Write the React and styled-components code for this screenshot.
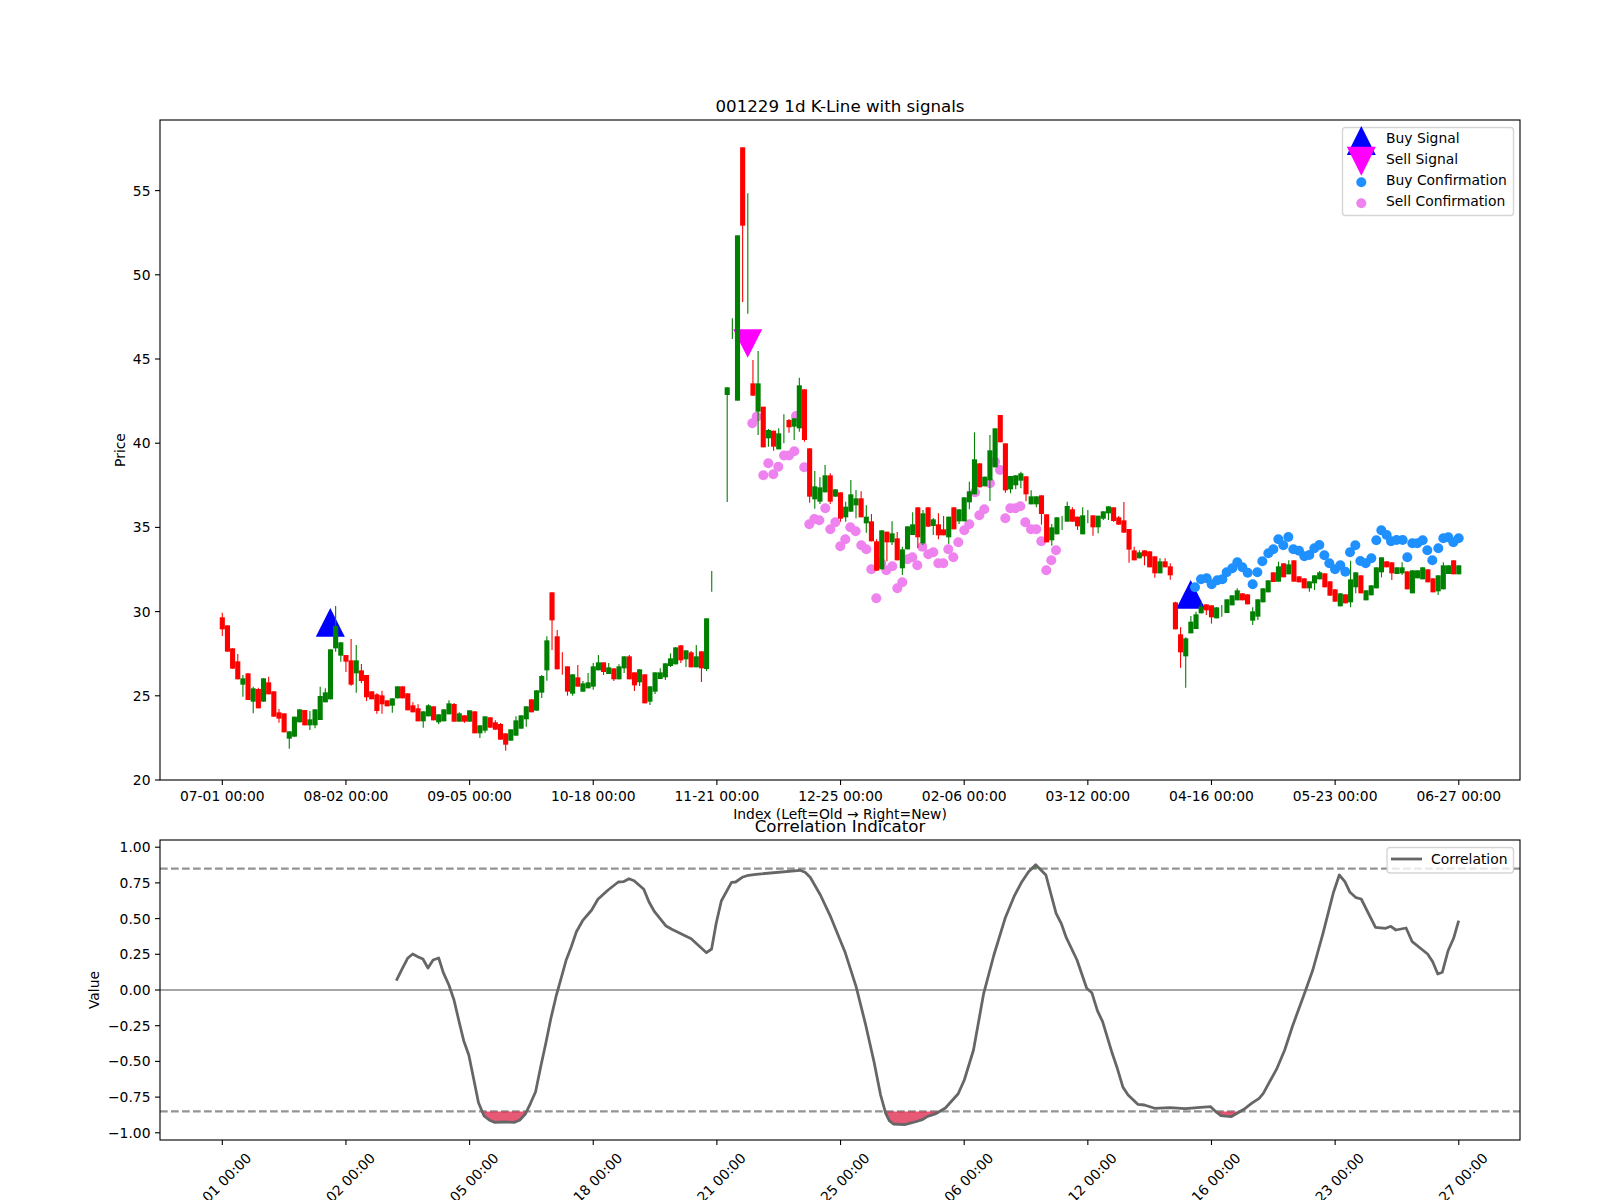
import styled, { createGlobalStyle } from 'styled-components';

const GlobalStyle = createGlobalStyle`
  html, body { margin: 0; padding: 0; background: #fff; }
`;

const Figure = styled.svg`
  display: block;
  width: 1600px;
  height: 1200px;
  font-family: 'DejaVu Sans', sans-serif;
`;
const Label = styled.text`
  font-size: 13.89px;
  fill: #000;
  text-anchor: ${p => p.$anchor || 'middle'};
`;
const Title = styled.text`
  font-size: 16.67px;
  fill: #000;
  text-anchor: middle;
`;
const Spine = styled.rect`
  fill: none;
  stroke: #000;
  stroke-width: 1.11;
`;
const Tick = styled.line`
  stroke: #000;
  stroke-width: 1.11;
`;
const LegendBox = styled.rect`
  fill: #fff;
  fill-opacity: 0.8;
  stroke: #ccc;
  stroke-opacity: 0.8;
  stroke-width: 1.39;
`;
const Level = styled.line`
  stroke: #808080;
  stroke-opacity: ${p => (p.$solid ? 0.7 : 0.85)};
  stroke-width: 2.08;
  stroke-dasharray: ${p => (p.$solid ? 'none' : '7.7 3.3')};
`;
const CorrLine = styled.polyline`
  fill: none;
  stroke: #666;
  stroke-width: 2.78;
  stroke-linejoin: round;
`;

// candles traced off the chart: [colour, body top, body bottom, high, low]
// y values are 3x zoomed, measured from the base of each block. 0 = same as body, no body = doji
const block1 = [
  ['r',232,268,218,288],['r',256,335],['r',325,386],['r',364,418,342],['g',415,434,405,470],['r',400,480],['g',445,485,440,520],['r',447,505,443],
  ['g',415,485],['r',427,463,410],['r',454,530],['r',517,536,507,548],['r',520,577],['g',574,596,0,626],['g',530,590],['g',508,547],
  ['r',510,556],['g',538,556,513,570],['g',508,556,0,565],['g',468,540,440],['g',457,487,445],['g',328,478],['g',258,325,198,335],['g',307,347,0,365],
  ['r',345,365,0,396],['r',361,434,297,437],['g',361,400,315,458],['r',391,423,372,430],['r',405,472,0,483],['r',454,478],['r',463,513,460,521],['r',466,493,452,521],
  ['r',481,499],['g',475,497,0,518],['g',439,475],['r',439,475],['r',460,511],['r',496,517,487],['r',505,544,493],['g',514,544,0,563],
  ['g',496,529,493],['r',499,541],['g',523,547,0,553],['g',508,544],['g',490,523,481],
  ['r',492,545,489],['g',520,545,517],['r',526,545,0,548],['g',511,545],['r',514,580],['g',556,580,0,594],['g',529,572,0,578],['r',532,563],
  ['r',547,569,541],['r',552,599,549],['r',580,614,0,632],['g',568,602],['g',541,587,529],['g',526,566],['g',499,538,0,560],['r',478,517],['g',451,512],
  ['g',408,458,405,474],['g',301,391,289,422],['r',157,241,0,330],['r',289,388,270],['r',0,0,337,404],['r',379,455,0,467],['g',403,461,0,467],['r',412,440,375],
  ['g',430,455,423],['g',427,445,399],['g',379,440,369,449],['g',367,391,345],['r',367,396,0,405],['g',382,402,369],['r',385,418,0,423],['g',379,418,373],
  ['g',349,385,0,399],['r',349,418,345],['r',397,436,0,453],['g',388,427,0,438],['r',403,490],['g',439,485,0,495],['g',397,455,0,462],['g',397,417,385],
  ['g',370,412,0,420],['g',355,378,340,381],['g',322,373],['r',316,361,0,369],['g',331,358,0,381],['r',337,382,333],['g',349,382,315],['r',334,385,0,426],
  ['g',235,387,0,393],['g',0,0,93,155],
];
const block2 = [
  null,null,['g',772,795,0,1116],['g',0,0,565,627],['g',316,812],['r',52,287,0,516],['g',0,0,190,551],['r',760,797,690],['g',760,845,663,915],['r',830,952],
  ['g',900,925,897,950],['r',902,950,0,962],['g',910,958,895],['g',0,0,853,940],['r',870,892,867,908],['g',865,890,0,930],['g',766,895,743,905],['r',778,930,0,935],
];
const block3 = [
  ['r',85,230,0,248],['g',199,238,153,266],['g',202,245,172,252],['g',166,217,135],['r',166,245,160,252],['g',208,230],['r',217,296,0,305],['g',260,292,245,305],
  ['g',223,275,180],['g',235,256,210,295],['r',235,292,214],['g',290,310,256,338],['r',304,364,282],['r',364,452,358],['g',331,448],['r',335,367,0,424],
  ['g',340,367,304,375],['r',355,421,336],['g',388,445,380,465],['g',319,388],['g',313,345,277],['r',262,352,0,384],['g',280,370,270,375],['r',262,320],
  ['g',298,318,294,345],['r',313,346,280,358],['r',328,346,288],['g',290,352,0,372],['r',262,328],['g',268,304,0,312],['g',232,304],['g',214,247,185,268],
  ['g',118,223,37],['r',130,202],['g',170,199],['g',91,181,45,243],['g',25,142],['r',-15,67],['r',70,211,0,218],['g',168,208,0,220],
  ['g',166,196,0,208],['g',160,182,155,205],['r',169,223,0,244],['g',229,253,211],['g',229,253,0,262],
];
const block4 = [
  ['r',226,282,0,314],['r',283,367],['g',322,361,312,377],['g',292,343],['g',0,0,288,330],['g',258,305,245],['r',268,305,262],['r',290,319,0,330],
  ['g',286,343,262],['g',0,0,270,310],['r',286,322,0,347],['g',287,322,0,340],['g',274,296,0,300],['g',259,280,0,300],['r',262,303,0,305],['r',292,314,288],
  ['r',301,338,246],['r',327,389,0,428],['r',391,421,380],['g',397,415,391],['r',391,409,0,436],['r',394,442],['r',409,460,0,473],['g',424,460,415],
  ['r',424,442,415],['r',439,466,430,479],['r',547,628,545],['r',643,697,622,743],['g',655,709,652,803],['g',605,640,588],['g',583,627,575],['g',559,580,545],
  ['r',553,571,0,585],['r',556,592,0,611],['g',562,595],['g',0,0,555,590],['g',538,579],['g',526,556],['g',511,541,505],['r',520,541],
  ['r',523,553],['g',574,602,562,615],['g',538,590,0,600],['g',505,547],['g',481,517],['r',457,486],
];
const block5 = [
  ['g',199,245,185],['r',190,232],['g',193,223,181],['r',181,245],['r',229,247],['r',235,265],['g',244,265,0,275],['g',226,250,0,270],
  ['g',217,238,213],['r',220,262],['r',244,287],['r',268,305],['g',280,319],['r',283,310],['g',238,307,182,322],['g',217,262,0,280],
  ['r',226,280],['g',271,301],['g',256,286],['g',202,265],['g',172,217,0,232],['r',184,202],['r',187,220,0,240],['g',202,222],
  ['g',202,220,187,225],['r',214,268],['g',211,280],['g',211,235],['g',202,238],['r',208,247],['r',235,277],['g',226,274,0,285],
  ['g',196,268,187],['g',196,222],['r',181,223],['g',196,223],
];

const rebase = (rows, base) =>
  rows.map(r => r && { color: r[0], top: base + r[1] / 3, bottom: base + r[2] / 3, high: r[3] ? base + r[3] / 3 : 0, low: r[4] ? base + r[4] / 3 : 0, doji: !r[1] && !r[2] });

const candles = [
  ...rebase(block1, 540),
  ...rebase(block2, 130),
  ...rebase(block3, 420),
  ...rebase(block4, 420),
  ...rebase(block5, 500),
];

const indexX = i => 222.3 + 5.152 * i;

const tickDates = ['07-01', '08-02', '09-05', '10-18', '11-21', '12-25', '02-06', '03-12', '04-16', '05-23', '06-27'];
const xTicks = tickDates.map((d, k) => ({ x: indexX(k * 24), label: `${d} 00:00` }));
const priceTicks = [20, 25, 30, 35, 40, 45, 50, 55];
const priceY = p => 780 - (p - 20) * 16.84;
const corrTicks = ['1.00', '0.75', '0.50', '0.25', '0.00', '−0.25', '−0.50', '−0.75', '−1.00'];
const corrY = v => 990 - 142.8 * v;

const sellDots = [
  [752.3,423.3],[756.7,416.7],[796,416],[768.3,463.3],[778.3,466.7],[763.3,475.3],[773.3,474.3],[784,455.5],[789,455.5],[794.3,451.2],[804.2,467.3],
  [809.3,524.3],[814.3,519],[819.3,520.3],[825.3,508.3],[830.3,529.3],[835.3,522.3],[840.3,546.3],[845.3,539.3],[850.3,527.3],[855.7,531.3],[861.3,545.3],
  [866.3,549.3],[871.3,569.3],[876.3,598.3],[881.3,563.3],[886.3,570.3],[892.3,566.3],[897.3,588.3],[902.3,582.3],[907.3,559.3],[912.3,557.3],[917.3,565.3],
  [922.3,546.7],[928.3,554.3],[933.3,552.3],[938.3,563.3],[943.3,563.3],[948.3,549.3],[953.3,557.3],[958.3,542.3],[964.3,530.3],[969.3,524.3],[975,492.3],
  [979.3,515.3],[984.3,509.3],[990,483.3],[995,461.7],[1000,470],[1005.3,518.3],[1010.3,508.3],[1015.3,508.3],[1020.3,506.3],[1025.3,522.3],[1031,529.3],
  [1036.3,529.3],[1041.3,541.3],[1046.3,570.3],[1051.3,560.3],[1056,550.3],
];
// buy dots, zoomed 3x from (1180,500)
const buyDots = [
  [45,262],[63,238],[80,235],[95,253],[112,241],[127,238],[140,217],[157,205],[172,187],[187,202],[203,218],[218,253],[232,217],[247,184],[265,160],[280,148],
  [295,118],[310,136],[325,111],[340,148],[357,152],[373,169],[388,165],[403,145],[418,135],[433,166],[448,190],[465,208],[481,196],[496,215],[510,157],[526,136],
  [541,183],[557,190],[574,175],[589,121],[604,91],[620,105],[633,124],[650,120],[668,120],[682,172],[697,130],[712,130],[728,121],[742,151],[757,181],[775,145],
  [790,115],[805,112],[820,127],[836,115],
].map(([x, y]) => [1180 + x / 3, 500 + y / 3]);

// correlation line, x from the 1.96x crops, y from the 3x ones
const corrLeft = [
  [620,632],[632,595],[642,565],[652,552],[662,560],[672,567],[682,594],[692,570],[703,564],[712,608],[723,645],[733,690],[743,755],[752,812],[762,855],[772,930],
  [781,998],[792,1038],[802,1050],[812,1057],[832,1056],[852,1057],[862,1050],[873,1032],[883,1000],[893,965],[903,890],[913,820],[923,745],[933,680],[943,625],
  [953,570],[963,530],[973,485],[985,452],[1003,420],[1015,388],[1035,360],[1055,336],[1065,335],[1076,326],[1086,332],[1105,358],[1115,395],[1126,425],[1148,467],
  [1160,478],[1198,506],[1228,548],[1238,537],[1247,460],[1257,393],[1277,337],[1285,336],[1298,322],[1310,316],[1325,313],[1337,302],[1348,290],[1365,286],
  [1385,293],[1397,291],[1420,312],[1432,335],[1460,412],[1490,505],
].map(([x, y]) => [80 + x / 1.96, 770 + y / 3]);
const corrRight = [
  [-80,640],[-40,745],[-5,301],
];
const corrRest = [
  [0,301],[10,307],[20,322],[40,375],[60,440],[88,545],[110,650],[128,760],[145,875],[158,975],[168,1030],[175,1052],[183,1062],[205,1064],[225,1056],[240,1049],
  [250,1039],[265,1032],[285,1014],[310,971],[322,930],[340,840],[360,670],[380,555],[402,445],[420,378],[435,335],[448,305],[462,284],[482,315],[502,430],[512,460],
  [522,503],[543,570],[562,655],[572,668],[583,722],[593,755],[612,850],[622,895],[633,952],[643,975],[662,1003],[675,1005],[695,1015],[725,1013],[755,1016],[785,1012],
  [805,1010],[815,1025],[825,1037],[845,1040],[870,1018],[885,1000],[900,985],[908,970],[935,895],[950,840],[965,770],[990,665],[1005,600],[1025,490],[1045,370],
  [1057,315],[1068,335],[1078,367],[1090,383],[1100,387],[1128,472],[1148,475],[1158,469],[1168,480],[1188,474],[1200,515],[1230,552],[1240,575],[1250,612],[1259,607],
  [1270,543],[1281,505],[1291,452],
].map(([x, y]) => [800 + x / 1.96, 770 + y / 3]);
const corrPoints = [...corrLeft.filter(p => p[0] < 760), ...corrRest.filter(p => p[0] > 760)];
void corrRight;

// runs of the line past a level, closed along the level, for the shaded bits
function shade(points, level, below) {
  const past = p => (below ? p[1] > level : p[1] < level);
  const runs = [];
  let run = null;
  points.forEach((p, i) => {
    const prev = points[i - 1];
    if (prev && past(p) !== past(prev)) {
      const t = (level - prev[1]) / (p[1] - prev[1]);
      const cross = [prev[0] + t * (p[0] - prev[0]), level];
      if (run) {
        run.push(cross);
        runs.push(run);
        run = null;
      } else {
        run = [cross];
      }
    }
    if (run && past(p)) run.push(p);
  });
  return runs;
}
const toPoints = pts => pts.map(p => p.map(n => n.toFixed(1)).join(',')).join(' ');

const triangle = (x, apex, base) => `${x},${apex} ${x - 14.5},${base} ${x + 14.5},${base}`;

function Candle({ candle, x }) {
  const fill = candle.color === 'r' ? '#ff0000' : '#008000';
  const high = candle.high || candle.top;
  const low = candle.low || candle.bottom;
  return (
    <g>
      <line x1={x} x2={x} y1={high} y2={low} stroke={fill} strokeWidth="1.1" />
      {!candle.doji && <rect x={x - 2.55} y={candle.top} width="5.1" height={candle.bottom - candle.top} fill={fill} />}
    </g>
  );
}

function PriceChart() {
  return (
    <g>
      <polygon points={triangle(330.3, 608, 636.7)} fill="#0000ff" />
      <polygon points={triangle(1190.7, 580, 608.7)} fill="#0000ff" />
      <polygon points={triangle(747.7, 357.7, 329.3)} fill="#ff00ff" />
      {buyDots.map(([x, y], i) => <circle key={i} cx={x} cy={y} r="5" fill="#1e90ff" />)}
      {sellDots.map(([x, y], i) => <circle key={i} cx={x} cy={y} r="5" fill="#ee82ee" />)}
      {candles.map((c, i) => c && <Candle key={i} candle={c} x={indexX(i)} />)}

      <Spine x="160" y="120" width="1360" height="660" />
      {xTicks.map(t => (
        <g key={t.label}>
          <Tick x1={t.x} x2={t.x} y1="780" y2="785" />
          <Label x={t.x} y="801">{t.label}</Label>
        </g>
      ))}
      {priceTicks.map(p => (
        <g key={p}>
          <Tick x1="155" x2="160" y1={priceY(p)} y2={priceY(p)} />
          <Label $anchor="end" x="150.5" y={priceY(p) + 5}>{p}</Label>
        </g>
      ))}
      <Title x="840" y="111.7">001229 1d K-Line with signals</Title>
      <Label x="840" y="819">Index (Left=Old → Right=New)</Label>
      <Label transform="rotate(-90 125 450)" x="125" y="450">Price</Label>

      <LegendBox x="1342.5" y="127.5" width="171" height="88" rx="3" />
      <polygon points={triangle(1361.3, 126, 155)} fill="#0000ff" />
      <polygon points={triangle(1361.3, 175.7, 146.7)} fill="#ff00ff" />
      <circle cx="1361.3" cy="182.3" r="5" fill="#1e90ff" />
      <circle cx="1361.3" cy="203.3" r="5" fill="#ee82ee" />
      <Label $anchor="start" x="1386" y="143">Buy Signal</Label>
      <Label $anchor="start" x="1386" y="164">Sell Signal</Label>
      <Label $anchor="start" x="1386" y="185">Buy Confirmation</Label>
      <Label $anchor="start" x="1386" y="206">Sell Confirmation</Label>
    </g>
  );
}

function CorrelationChart() {
  return (
    <g>
      <Level x1="160" x2="1520" y1={corrY(0.85)} y2={corrY(0.85)} />
      <Level x1="160" x2="1520" y1={corrY(-0.85)} y2={corrY(-0.85)} />
      <Level $solid x1="160" x2="1520" y1={corrY(0)} y2={corrY(0)} />
      {shade(corrPoints, corrY(-0.85), true).map((run, i) => (
        <polygon key={i} points={toPoints(run)} fill="#dc143c" fillOpacity="0.7" />
      ))}
      {shade(corrPoints, corrY(0.85), false).map((run, i) => (
        <polygon key={i} points={toPoints(run)} fill="#008000" fillOpacity="0.7" />
      ))}
      <CorrLine points={toPoints(corrPoints)} />

      <Spine x="160" y="840" width="1360" height="300" />
      {xTicks.map(t => (
        <g key={t.label}>
          <Tick x1={t.x} x2={t.x} y1="1140" y2="1145" />
          <Label transform={`rotate(-45 ${t.x} 1189)`} x={t.x} y="1189">{t.label}</Label>
        </g>
      ))}
      {corrTicks.map((label, i) => {
        const y = corrY(1 - i * 0.25);
        return (
          <g key={label}>
            <Tick x1="155" x2="160" y1={y} y2={y} />
            <Label $anchor="end" x="150.5" y={y + 5}>{label}</Label>
          </g>
        );
      })}
      <Title x="840" y="831.7">Correlation Indicator</Title>
      <Label transform="rotate(-90 99 990)" x="99" y="990">Value</Label>

      <LegendBox x="1387" y="847.5" width="126.5" height="25.5" rx="3" />
      <line x1="1391" x2="1422" y1="859" y2="859" stroke="#666" strokeWidth="2.78" />
      <Label $anchor="start" x="1431" y="864">Correlation</Label>
    </g>
  );
}

export default function App() {
  return (
    <>
      <GlobalStyle />
      <Figure viewBox="0 0 1600 1200">
        <PriceChart />
        <CorrelationChart />
      </Figure>
    </>
  );
}
